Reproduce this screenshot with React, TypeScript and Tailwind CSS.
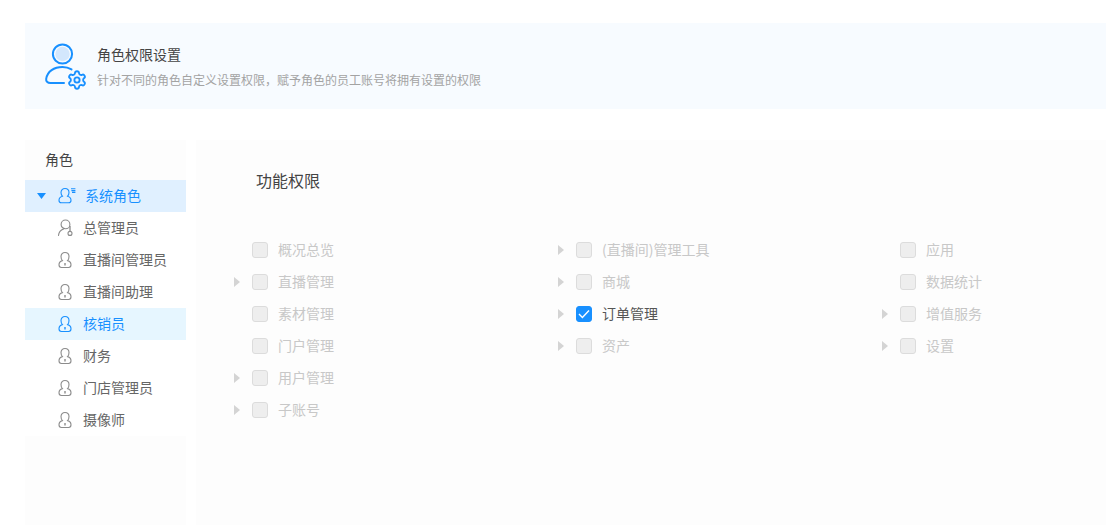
import { Settings } from "lucide-react";

const ROLES = ["总管理员", "直播间管理员", "直播间助理", "核销员", "财务", "门店管理员", "摄像师"];

const COLUMNS: { label: string; arrow?: boolean; checked?: boolean }[][] = [
  [
    { label: "概况总览" },
    { label: "直播管理", arrow: true },
    { label: "素材管理" },
    { label: "门户管理" },
    { label: "用户管理", arrow: true },
    { label: "子账号", arrow: true },
  ],
  [
    { label: "(直播间)管理工具", arrow: true },
    { label: "商城", arrow: true },
    { label: "订单管理", arrow: true, checked: true },
    { label: "资产", arrow: true },
  ],
  [
    { label: "应用" },
    { label: "数据统计" },
    { label: "增值服务", arrow: true },
    { label: "设置", arrow: true },
  ],
];

function RoleIcon({ color }: { color: string }) {
  return (
    <svg width="18" height="18" viewBox="0 0 18 18" fill="none" stroke={color} strokeWidth="1.1">
      <path d="M6.4 9.6C5.4 8.6 5 7.2 5 5.6C5 3.2 6.6 1.5 9 1.5C11.4 1.5 13 3.2 13 5.6C13 7.2 12.6 8.6 11.6 9.6C13.6 10.2 15 11.6 15 13.8C15 15.6 14.2 16.5 12.6 16.5H5.4C3.8 16.5 3 15.6 3 13.8C3 11.6 4.4 10.2 6.4 9.6Z" />
      <path d="M9 12V14.6" strokeWidth="1.4" />
    </svg>
  );
}

function AdminIcon() {
  return (
    <svg width="18" height="18" viewBox="0 0 18 18" fill="none" stroke="#8c8c8c" strokeWidth="1.1">
      <circle cx="9.5" cy="5.4" r="4.4" />
      <path d="M2.5 16.4C2.8 13.2 4.8 11 7.6 10" strokeLinecap="round" />
      <path d="M14 7V12" strokeWidth="1.3" />
      <circle cx="14" cy="14.4" r="2" />
    </svg>
  );
}

function GroupIcon() {
  return (
    <svg width="20" height="18" viewBox="0 0 20 18" fill="none" stroke="#1890ff" strokeWidth="1.1">
      <path d="M6.4 9.2C5.4 8.2 5 7 5 5.6C5 3.2 6.6 1.5 9 1.5C11.4 1.5 13 3.2 13 5.6C13 7 12.6 8.2 11.6 9.2C13.6 9.8 15 11.2 15 13.2C15 14.9 14.2 15.8 12.6 15.8H5.4C3.8 15.8 3 14.9 3 13.2C3 11.2 4.4 9.8 6.4 9.2Z" />
      <path d="M15 1.8H19.4M15.4 3.6H19.4M16 5.4H19.4" />
    </svg>
  );
}

function HeaderIcon() {
  return (
    <svg width="42" height="46" viewBox="0 0 42 46" fill="none" stroke="#1890ff" strokeWidth="2" className="overflow-visible">
      <circle cx="17.5" cy="11" r="9.6" />
      <circle cx="17.5" cy="11" r="7.2" fill="#d3e7fd" stroke="none" />
      <path d="M19 40H5.5C2.4 40 0.8 38.2 1.2 35.8C2.4 28.4 9 24 17.5 24C21 24 24 24.9 26.5 26.4" strokeLinecap="round" />
      <Settings x="21.5" y="26.5" width="21" height="21" strokeWidth="2.1" color="#1890ff" fill="#f0f7ff" />
    </svg>
  );
}

function Arrow({ hidden }: { hidden?: boolean }) {
  return (
    <svg width="6" height="10" viewBox="0 0 6 10" className={hidden ? "invisible" : ""}>
      <path d="M0 0L6 5L0 10Z" fill="#d4d4d4" />
    </svg>
  );
}

function Perm({ label, arrow, checked }: { label: string; arrow?: boolean; checked?: boolean }) {
  return (
    <div className="flex h-8 items-center">
      <Arrow hidden={!arrow} />
      <span
        className={`ml-[12px] flex h-4 w-4 items-center justify-center rounded-[3px] border ${
          checked ? "border-[#1890ff] bg-[#1890ff]" : "border-[#dcdcdc] bg-[#eeeeee]"
        }`}
      >
        {checked && (
          <svg width="12" height="10" viewBox="0 0 12 10" fill="none" stroke="#fff" strokeWidth="1.4">
            <path d="M1 5L4.4 8.4L11 1.4" />
          </svg>
        )}
      </span>
      <span className={`mb-[2px] ml-[10px] text-sm ${checked ? "text-[#555555]" : "text-[#c8c8c8]"}`}>{label}</span>
    </div>
  );
}

export default function App() {
  return (
    <div
      className="h-[525px] w-[1106px] overflow-hidden bg-white pl-[25px] pt-[23px]"
      style={{ fontFamily: '"Noto Sans CJK SC", "Noto Sans", sans-serif' }}
    >
      {/* header */}
      <div className="flex h-[86px] items-center bg-[#f7fbff] pl-[20px]">
        <HeaderIcon />
        <div className="ml-[10px] pt-[2px]">
          <div className="text-sm leading-[20px] text-[#444444]">角色权限设置</div>
          <div className="mt-[6px] text-xs leading-[20px] text-[#a3a3a3]">
            针对不同的角色自定义设置权限，赋予角色的员工账号将拥有设置的权限
          </div>
        </div>
      </div>

      <div className="mt-[31px] flex h-[385px] gap-[10px]">
        {/* roles */}
        <div className="flex w-[161px] flex-col bg-[#fdfdfd]">
          <div className="h-10 pl-[20px] text-sm leading-[39px] text-[#444444]">角色</div>
          <div className="flex h-8 items-center bg-[#e0f0ff] pl-[12px] text-sm text-[#1890ff]">
            <svg width="9" height="6" viewBox="0 0 9 6">
              <path d="M0 0H9L4.5 6Z" fill="#1890ff" />
            </svg>
            <span className="ml-[10px] flex">
              <GroupIcon />
            </span>
            <span className="mb-[3px] ml-[9px]">系统角色</span>
          </div>
          <div className="bg-white">
            {ROLES.map((r, i) => (
              <div
                key={r}
                className={`flex h-8 items-center pl-[31px] text-sm ${
                  r === "核销员" ? "bg-[#e6f6ff] text-[#1890ff]" : "text-[#666666]"
                }`}
              >
                {i === 0 ? <AdminIcon /> : <RoleIcon color={r === "核销员" ? "#1890ff" : "#8c8c8c"} />}
                <span className="mb-[3px] ml-[9px]">{r}</span>
              </div>
            ))}
          </div>
          <div className="flex-1" />
        </div>

        {/* permissions */}
        <div className="flex-1 bg-[#fdfdfd] pl-[38px]">
          <div className="pl-[22px] pt-[28px] text-base leading-[24px] text-[#444444]">功能权限</div>
          <div className="mt-[42px] grid grid-cols-[324px_324px_1fr]">
            {COLUMNS.map((col, i) => (
              <div key={i}>
                {col.map((p) => (
                  <Perm key={p.label} {...p} />
                ))}
              </div>
            ))}
          </div>
        </div>
      </div>
    </div>
  );
}
